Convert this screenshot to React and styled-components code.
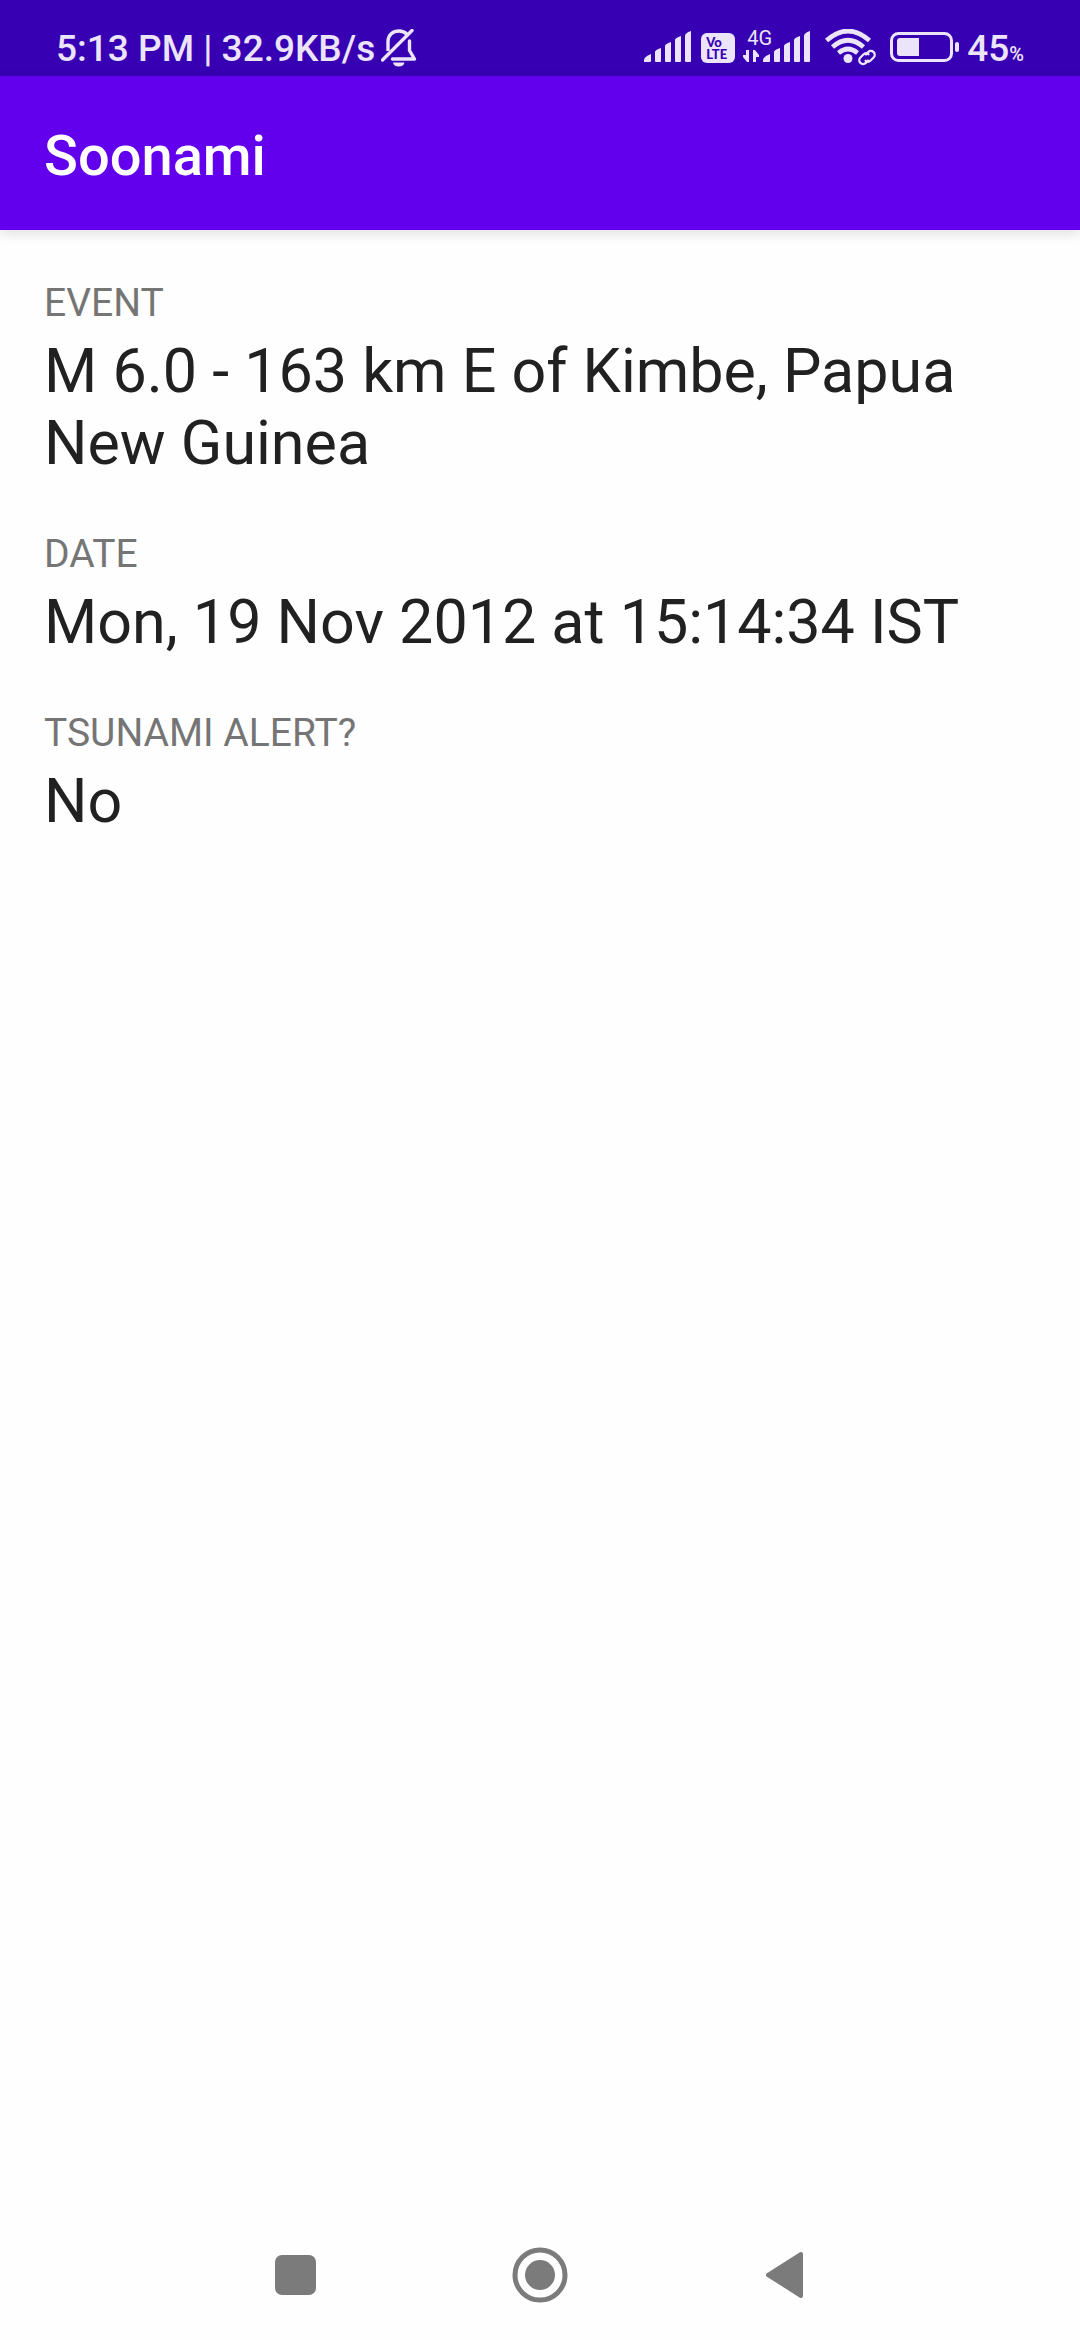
import React from "react";
import styled, { createGlobalStyle } from "styled-components";

const ink = "#ece4fb";

const GlobalStyle = createGlobalStyle`
  *, *::before, *::after { box-sizing: border-box; }
  body {
    margin: 0;
    background: #fefefe;
    font-family: Roboto, "Liberation Sans", sans-serif;
  }
`;

const Screen = styled.div`
  display: flex;
  flex-direction: column;
  min-height: 100vh;
`;

const StatusBar = styled.div`
  display: flex;
  align-items: center;
  justify-content: space-between;
  height: 76px;
  padding: 22px 56px 0;
  background: #3700b3;
  color: ${ink};
`;

const StatusGroup = styled.div`
  display: flex;
  align-items: center;
  gap: ${(p) => p.$gap}px;
`;

const StatusText = styled.span`
  font-size: 37px;
  line-height: 44px;
  font-weight: 500;
  white-space: nowrap;
`;

const Percent = styled.span`
  font-size: 20px;
  line-height: 20px;
  font-weight: 500;
`;

const Glyph = styled.svg`
  display: block;
  flex: none;
  height: 40px;
`;

const VolteBadge = styled.span`
  display: flex;
  flex-direction: column;
  justify-content: center;
  width: 34px;
  height: 30px;
  margin-bottom: 2px;
  padding-left: 5px;
  border-radius: 6px;
  background: ${ink};
  color: #3700b3;
  font-family: Lato, sans-serif;
  font-size: 13px;
  line-height: 12px;
  font-weight: 900;
`;

const MobileSignal = styled.span`
  position: relative;
  display: block;
`;

const NetworkType = styled.span`
  position: absolute;
  top: -2px;
  left: 4px;
  font-size: 20px;
  line-height: 22px;
`;

const AppBar = styled.header`
  display: flex;
  align-items: center;
  height: 154px;
  padding: 6px 44px 0;
  background: #6200ee;
  box-shadow: 0 4px 12px rgba(0, 0, 0, 0.12);
`;

const Title = styled.h1`
  margin: 0;
  color: #ffffff;
  font-size: 56px;
  line-height: 64px;
  font-weight: 500;
`;

const Details = styled.dl`
  flex: 1;
  display: flex;
  flex-direction: column;
  gap: 52px;
  margin: 0;
  padding: 50px 44px;
`;

const Field = styled.div`
  display: flex;
  flex-direction: column;
  gap: 9px;
`;

const Label = styled.dt`
  color: #757575;
  font-size: 39px;
  line-height: 46px;
  text-transform: uppercase;
`;

const Value = styled.dd`
  margin: 0;
  color: #212121;
  font-size: 61px;
  line-height: 72px;
`;

const NavBar = styled.nav`
  display: flex;
  justify-content: center;
  height: 130px;
`;

const NavButton = styled.button`
  display: flex;
  align-items: center;
  justify-content: center;
  width: 245px;
  padding: 0;
  border: 0;
  background: none;
  color: #7b7b7b;
`;

const bars = [
  "M0 31V29Q0 26 7 23V30Q7 31 6 31H1Q0 31 0 31Z",
  "M11 21Q11 19 17 17V30Q17 31 16 31H12Q11 31 11 30Z",
  "M21 15Q21 13 27 11V30Q27 31 26 31H22Q21 31 21 30Z",
  "M31 9Q31 7 37 5V30Q37 31 36 31H32Q31 31 31 30Z",
  "M41 5Q41 2 47 0V30Q47 31 46 31H42Q41 31 41 30Z",
];

function SignalBars({ x }) {
  return (
    <g transform={`translate(${x} 2)`}>
      {bars.map((d) => (
        <path key={d} d={d} fill={ink} />
      ))}
    </g>
  );
}

function BellOff() {
  return (
    <Glyph width="36" viewBox="0 0 36 40" fill="none" stroke={ink} strokeWidth="3.4" aria-label="Silent">
      <path d="M7 22V12.5C7 6 12 2 18 2c3.500 0 6 1.200 8 3.200" />
      <path d="M28.500 12v9.500l5 8.500H11.500" strokeLinejoin="round" strokeLinecap="round" />
      <path d="M1.500 31 31 1.500" strokeLinecap="round" />
      <path d="M12 33.500h11.500a5.800 4.500 0 0 1-11.500 0Z" fill={ink} stroke="none" />
    </Glyph>
  );
}

function WifiLink() {
  return (
    <Glyph width="51" viewBox="0 0 51 40" fill="none" stroke={ink} aria-label="Wi-Fi">
      <path d="M1.500 11.500Q23 -7.500 44.500 11.500" strokeWidth="4.600" />
      <path d="M7.500 18Q23 4.500 38.500 18" strokeWidth="4.600" />
      <path d="M13.500 24Q23 16 32.500 24" strokeWidth="4.600" />
      <circle cx="23" cy="29.500" r="4.500" fill={ink} stroke="none" />
      <g strokeWidth="2.300" strokeLinecap="round">
        <path d="m41 25.500 2.200-2.400a3.800 3.800 0 0 1 5.400 5.400l-3 3a3.800 3.800 0 0 1-5 .3" />
        <path d="m43 31.500-2.200 2.400a3.800 3.800 0 0 1-5.400-5.400l3-3a3.800 3.800 0 0 1 5-.3" />
      </g>
    </Glyph>
  );
}

function Battery() {
  return (
    <Glyph width="69" viewBox="0 0 69 40" aria-label="Battery">
      <rect x="1.500" y="4.500" width="60" height="27" rx="7" fill="none" stroke={ink} strokeWidth="3" />
      <path d="M10 9H29V27H10Q7 27 7 24V12Q7 9 10 9Z" fill={ink} />
      <rect x="65" y="13" width="4" height="10" rx="2" fill={ink} />
    </Glyph>
  );
}

const fields = [
  { label: "Event", value: "M 6.0 - 163 km E of Kimbe, Papua New Guinea" },
  { label: "Date", value: "Mon, 19 Nov 2012 at 15:14:34 IST" },
  { label: "Tsunami alert?", value: "No" },
];

export default function App() {
  return (
    <Screen>
      <GlobalStyle />
      <StatusBar>
        <StatusGroup $gap={6}>
          <StatusText>5:13 PM | 32.9KB/s</StatusText>
          <BellOff />
        </StatusGroup>
        <StatusGroup $gap={14}>
          <StatusGroup $gap={8}>
            <Glyph width="49" viewBox="0 0 49 40" aria-label="Signal, SIM 1">
              <SignalBars x={0} />
            </Glyph>
            <VolteBadge>
              <span>Vo</span>
              <span>LTE</span>
            </VolteBadge>
            <MobileSignal>
              <NetworkType>4G</NetworkType>
              <Glyph width="68" viewBox="0 0 68 40" aria-label="Signal, SIM 2">
                <path d="M6 21V33H4L0 28V26H3V21ZM10 33V21H12L16 26V28H13V33Z" fill={ink} />
                <SignalBars x={20} />
              </Glyph>
            </MobileSignal>
          </StatusGroup>
          <WifiLink />
          <StatusGroup $gap={8}>
            <Battery />
            <StatusText>
              45<Percent>%</Percent>
            </StatusText>
          </StatusGroup>
        </StatusGroup>
      </StatusBar>
      <AppBar>
        <Title>Soonami</Title>
      </AppBar>
      <Details>
        {fields.map((f) => (
          <Field key={f.label}>
            <Label>{f.label}</Label>
            <Value>{f.value}</Value>
          </Field>
        ))}
      </Details>
      <NavBar>
        <NavButton aria-label="Recent apps">
          <svg width="56" height="56" viewBox="0 0 56 56">
            <rect x="8" y="8" width="41" height="40" rx="7" fill="currentColor" />
          </svg>
        </NavButton>
        <NavButton aria-label="Home">
          <svg width="56" height="56" viewBox="0 0 56 56">
            <circle cx="28" cy="28" r="25" fill="none" stroke="currentColor" strokeWidth="5" />
            <circle cx="28" cy="28" r="15" fill="currentColor" />
          </svg>
        </NavButton>
        <NavButton aria-label="Back">
          <svg width="56" height="56" viewBox="0 0 56 56">
            <path d="M11 28 44 7V49Z" fill="currentColor" stroke="currentColor" strokeWidth="4" strokeLinejoin="round" />
          </svg>
        </NavButton>
      </NavBar>
    </Screen>
  );
}
